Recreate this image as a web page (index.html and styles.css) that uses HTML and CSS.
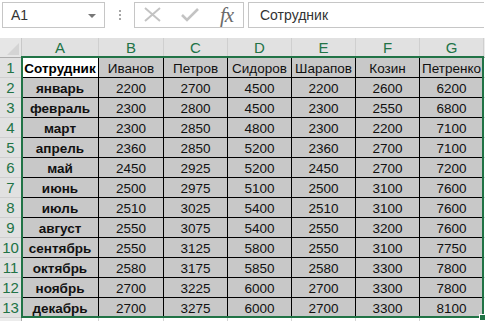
FILE: index.html
```html
<!DOCTYPE html>
<html lang="ru">
<head>
<meta charset="utf-8">
<title>Сотрудник</title>
<link rel="stylesheet" href="styles.css">
</head>
<body>
<div class="app">
  <div class="formula-bar">
    <div class="namebox"><span class="ref">A1</span><span class="caret"></span></div>
    <div class="dots"><i></i><i></i><i></i></div>
    <div class="fxbox">
      <svg class="ico" width="18" height="16" viewBox="0 0 18 16"><path d="M1 1 L16 14 M16 1 L1 14" stroke="#c3c3c3" stroke-width="2" fill="none"/></svg>
      <svg class="ico" width="18" height="16" viewBox="0 0 18 16"><path d="M1 8 L6 13 L17 2" stroke="#c3c3c3" stroke-width="2.6" fill="none"/></svg>
      <span class="fx">fx</span>
    </div>
    <div class="input">Сотрудник</div>
  </div>
  <div class="sheet-wrap">
    <div class="sheet" id="sheet"></div>
    <div class="selection"></div>
    <div class="handle"></div>
  </div>
</div>
<script src="app.js"></script>
</body>
</html>
```
FILE: app.js
```js
const cols = ["A","B","C","D","E","F","G"];
const rows = [
  ["Сотрудник","Иванов","Петров","Сидоров","Шарапов","Козин","Петренко"],
  ["январь",2200,2700,4500,2200,2600,6200],
  ["февраль",2300,2800,4500,2300,2550,6800],
  ["март",2300,2850,4800,2300,2200,7100],
  ["апрель",2360,2850,5200,2360,2700,7100],
  ["май",2450,2925,5200,2450,2700,7200],
  ["июнь",2500,2975,5100,2500,3100,7600],
  ["июль",2510,3025,5400,2510,3100,7600],
  ["август",2550,3075,5400,2550,3200,7600],
  ["сентябрь",2550,3125,5800,2550,3100,7750],
  ["октябрь",2580,3175,5850,2580,3300,7800],
  ["ноябрь",2700,3225,6000,2700,3300,7800],
  ["декабрь",2700,3275,6000,2700,3300,8100]
];
const s = document.getElementById("sheet");
let h = '<div class="corner"><span class="tri"></span></div>';
cols.forEach(c => h += `<div class="colh">${c}</div>`);
h += '<div class="colh blank"></div>';
rows.forEach((r, i) => {
  h += `<div class="rowh">${i + 1}</div>`;
  r.forEach((v, j) => {
    let cls = "cell";
    if (j === 0 && i > 0) cls += " bold";
    if (i === 0 && j === 0) cls += " active bold";
    h += `<div class="${cls}">${v}</div>`;
  });
  h += '<div class="rest"></div>';
});
h += '<div class="rowh tail"></div>';
for (let k = 0; k < 8; k++) h += '<div class="rest tailc"></div>';
s.innerHTML = h;
```
FILE: styles.css
```css
html, body {
  margin: 0;
  padding: 0;
  background: #fff;
}
body {
  width: 485px;
  height: 321px;
  overflow: hidden;
  font-family: "Liberation Sans", Arial, sans-serif;
}
.app {
  width: 485px;
  height: 321px;
  overflow: hidden;
}
.formula-bar {
  height: 38px;
  box-sizing: border-box;
  padding-top: 2px;
  display: flex;
  align-items: flex-start;
}
.namebox {
  margin-left: 2px;
  width: 103px;
  height: 26px;
  box-sizing: border-box;
  border: 1px solid #c6c6c6;
  display: flex;
  align-items: center;
  padding-left: 8px;
  padding-right: 8px;
  justify-content: space-between;
}
.ref {
  font-size: 14px;
  color: #333;
}
.caret {
  width: 0;
  height: 0;
  border-left: 4px solid transparent;
  border-right: 4px solid transparent;
  border-top: 4px solid #777;
  margin-top: 1px;
}
.dots {
  width: 29px;
  height: 26px;
  display: flex;
  flex-direction: column;
  align-items: center;
  justify-content: center;
  gap: 2px;
}
.dots i {
  width: 2px;
  height: 2px;
  background: #a6a6a6;
}
.fxbox {
  width: 110px;
  height: 26px;
  box-sizing: border-box;
  border: 1px solid #c6c6c6;
  display: flex;
  align-items: center;
  padding-left: 9px;
  gap: 19px;
}
.ico {
  display: block;
}
.fx {
  font-family: "Liberation Serif", "DejaVu Serif", serif;
  font-style: italic;
  font-size: 21px;
  color: #6b6b6b;
  margin-left: 2px;
  line-height: 1;
  letter-spacing: -1px;
}
.input {
  margin-left: 4px;
  width: 236px;
  height: 26px;
  box-sizing: border-box;
  border: 1px solid #c6c6c6;
  border-right: none;
  padding-left: 11px;
  font-size: 14px;
  color: #333;
  line-height: 24px;
}
.sheet-wrap {
  position: relative;
}
.sheet {
  display: grid;
  grid-template-columns: 22px 77px 65px 64px 64px 64px 64px 64px 20px;
  grid-template-rows: 20px repeat(13, 20px) 20px;
  font-size: 13.5px;
}
.corner {
  background: #e6e6e6;
  border-right: 1px solid #c8c8c8;
  border-bottom: 1px solid #ababab;
  position: relative;
  box-sizing: border-box;
}
.tri {
  position: absolute;
  right: 2px;
  bottom: 2px;
  width: 0;
  height: 0;
  border-left: 12px solid transparent;
  border-bottom: 12px solid #d4d4d4;
}
.colh {
  background: #e1e1e1;
  color: #217346;
  font-size: 15px;
  display: flex;
  align-items: center;
  justify-content: center;
  border-right: 1px solid #cfcfcf;
  border-bottom: 1px solid #ababab;
  box-sizing: border-box;
}
.colh.blank {
  background: #ececec;
}
.rowh {
  background: #e1e1e1;
  color: #217346;
  font-size: 15px;
  display: flex;
  align-items: center;
  justify-content: center;
  border-right: 1px solid #ababab;
  border-bottom: 1px solid #cfcfcf;
  box-sizing: border-box;
}
.rowh.tail {
  background: #ececec;
}
.cell {
  background: #c8c8c8;
  color: #111;
  display: flex;
  align-items: center;
  justify-content: center;
  border-right: 1px solid #000;
  border-bottom: 1px solid #000;
  box-sizing: border-box;
  white-space: nowrap;
  overflow: hidden;
  padding-top: 1px;
}
.cell.bold {
  font-weight: bold;
}
.cell.active {
  background: #fff;
  color: #000;
}
.rest {
  background: #fff;
  border-right: 1px solid #d4d4d4;
  border-bottom: 1px solid #d4d4d4;
  box-sizing: border-box;
}
.tailc {
  background: #fff;
}
.selection {
  position: absolute;
  left: 21px;
  top: 18px;
  width: 463px;
  height: 262px;
  box-sizing: border-box;
  border: 2px solid #217346;
  pointer-events: none;
}
.handle {
  position: absolute;
  left: 479px;
  top: 276px;
  width: 5px;
  height: 5px;
  background: #217346;
  border: 1px solid #fff;
}
```
